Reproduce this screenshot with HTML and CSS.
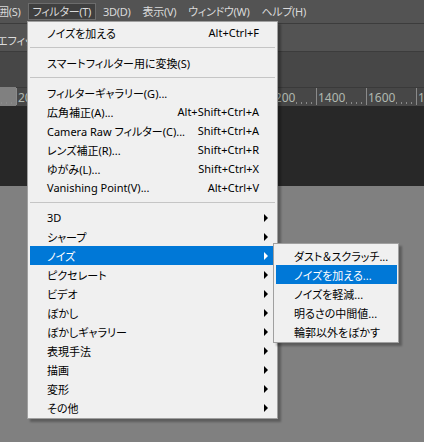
FILE: index.html
```html
<!DOCTYPE html>
<html lang="ja">
<head>
<meta charset="utf-8">
<title>フィルター</title>
<link rel="stylesheet" href="styles.css">
</head>
<body>
<div class="app">
  <nav class="menubar">
    <span class="mb-item first">選択範囲(S)</span>
    <span class="mb-item active">フィルター(T)</span>
    <span class="mb-item">3D(D)</span>
    <span class="mb-item">表示(V)</span>
    <span class="mb-item">ウィンドウ(W)</span>
    <span class="mb-item">ヘルプ(H)</span>
  </nav>
  <div class="options"><span class="opt-text">エフィッ</span></div>
  <div class="tabs"></div>
  <div class="ruler">
    <span class="seg"><span class="lbl">200</span></span>
    <span class="seg"></span>
    <span class="seg"></span>
    <span class="seg"></span>
    <span class="seg"></span>
    <span class="seg"><span class="lbl">1200</span></span>
    <span class="seg"><span class="lbl">1400</span></span>
    <span class="seg"><span class="lbl">1600</span></span>
    <span class="seg"><span class="lbl">1800</span></span>
  </div>
  <div class="canvas"></div>
  <div class="pasteboard"></div>

  <div class="menu">
    <div class="item"><span class="label">ノイズを加える</span><span class="key">Alt+Ctrl+F</span></div>
    <div class="sep"></div>
    <div class="item"><span class="label">スマートフィルター用に変換(S)</span></div>
    <div class="sep"></div>
    <div class="item"><span class="label">フィルターギャラリー(G)...</span></div>
    <div class="item"><span class="label">広角補正(A)...</span><span class="key">Alt+Shift+Ctrl+A</span></div>
    <div class="item"><span class="label">Camera Raw フィルター(C)...</span><span class="key">Shift+Ctrl+A</span></div>
    <div class="item"><span class="label">レンズ補正(R)...</span><span class="key">Shift+Ctrl+R</span></div>
    <div class="item"><span class="label">ゆがみ(L)...</span><span class="key">Shift+Ctrl+X</span></div>
    <div class="item"><span class="label">Vanishing Point(V)...</span><span class="key">Alt+Ctrl+V</span></div>
    <div class="sep"></div>
    <div class="item"><span class="label">3D</span><span class="arrow"></span></div>
    <div class="item"><span class="label">シャープ</span><span class="arrow"></span></div>
    <div class="item selected"><span class="label">ノイズ</span><span class="arrow"></span></div>
    <div class="item"><span class="label">ピクセレート</span><span class="arrow"></span></div>
    <div class="item"><span class="label">ビデオ</span><span class="arrow"></span></div>
    <div class="item"><span class="label">ぼかし</span><span class="arrow"></span></div>
    <div class="item"><span class="label">ぼかしギャラリー</span><span class="arrow"></span></div>
    <div class="item"><span class="label">表現手法</span><span class="arrow"></span></div>
    <div class="item"><span class="label">描画</span><span class="arrow"></span></div>
    <div class="item"><span class="label">変形</span><span class="arrow"></span></div>
    <div class="item"><span class="label">その他</span><span class="arrow"></span></div>
  </div>

  <div class="menu submenu">
    <div class="item"><span class="label">ダスト＆スクラッチ...</span></div>
    <div class="item selected"><span class="label">ノイズを加える...</span></div>
    <div class="item"><span class="label">ノイズを軽減...</span></div>
    <div class="item"><span class="label">明るさの中間値...</span></div>
    <div class="item"><span class="label">輪郭以外をぼかす</span></div>
  </div>
</div>
</body>
</html>
```
FILE: styles.css
```css
html, body {
  margin: 0;
  padding: 0;
}
body {
  width: 424px;
  height: 442px;
  overflow: hidden;
  background: #808080;
  font-family: "Noto Sans", "Noto Sans CJK JP", sans-serif;
  font-size: 11px;
  font-feature-settings: "palt" 1;
}
.app {
  position: relative;
  width: 424px;
  height: 442px;
  overflow: hidden;
  display: flex;
  flex-direction: column;
}

/* ---------- Photoshop workspace ---------- */
.menubar {
  height: 24px;
  box-sizing: border-box;
  padding-top: 3px;
  background: #535353;
  border-bottom: 1px solid #3c3c3c;
  display: flex;
  align-items: flex-start;
  gap: 2px;
  white-space: nowrap;
  flex: none;
}
.mb-item {
  color: #dadada;
  line-height: 15px;
  padding: 0 4px;
  border: 1px solid transparent;
  letter-spacing: -0.3px;
}
.mb-item.first {
  margin-left: -39px;
}
.mb-item.active {
  background: #3f3f3f;
  border-color: #6c6c6c;
}
.options {
  height: 27px;
  background: #535353;
  border-bottom: 1px solid #3c3c3c;
  display: flex;
  align-items: center;
  flex: none;
}
.opt-text {
  color: #dcdcdc;
  margin-left: -3px;
  padding-top: 5px;
}
.tabs {
  height: 35px;
  background: #474747;
  flex: none;
}
.ruler {
  height: 18px;
  border-top: 1px solid #3a3a3a;
  background: #474747;
  display: flex;
  margin-left: 16px;
  flex: none;
  position: relative;
}
.seg {
  flex: none;
  width: 50px;
  box-sizing: border-box;
  border-left: 1px solid #8a8a8a;
  height: 17px;
  padding-top: 4px;
  background-image: repeating-linear-gradient(to right, transparent 0 4px, #8a8a8a 4px 5px);
  background-size: 100% 2px;
  background-repeat: no-repeat;
  background-position: 0 14px;
}
.ruler::before {
  content: "";
  position: absolute;
  left: -16px;
  top: 14px;
  width: 16px;
  height: 2px;
  background-image: repeating-linear-gradient(to left, transparent 0 4px, #8a8a8a 4px 5px);
}
.lbl {
  display: inline-block;
  padding: 0 1px 0 1px;
  font-size: 12px;
  line-height: 12px;
  height: 12px;
  color: #b0b8b0;
  background: #474747;
  vertical-align: top;
}
.canvas {
  height: 80px;
  background: #282828;
  flex: none;
}
.pasteboard {
  flex: 1;
  background: #808080;
}

/* ---------- Drop-down menus ---------- */
.menu {
  position: absolute;
  left: 27px;
  top: 21px;
  width: 251px;
  box-sizing: border-box;
  padding: 1px 2px 1px 2px;
  background: #f0f0f0;
  border: 1px solid #a0a0a0;
  box-shadow: 3px 3px 2px rgba(0, 0, 0, 0.28);
  color: #000;
}
.item {
  height: 19px;
  display: flex;
  align-items: center;
  padding: 0 6px 0 17px;
  white-space: nowrap;
}
.label {
  flex: 1;
}
.key {
  margin-right: 10px;
}
.arrow {
  width: 0;
  height: 0;
  border-left: 4px solid #000;
  border-top: 4px solid transparent;
  border-bottom: 4px solid transparent;
  margin-right: 1px;
}
.item.selected {
  background: #0078d7;
  color: #fff;
}
.item.selected .arrow {
  border-left-color: #fff;
}
.sep {
  height: 1px;
  margin: 5px 0 5px 0;
  background: #c5c5c5;
}
.submenu {
  left: 273px;
  top: 243px;
  width: 126px;
  padding: 2px 1px 1px 2px;
}
.submenu .item {
  padding-left: 18px;
}
```
